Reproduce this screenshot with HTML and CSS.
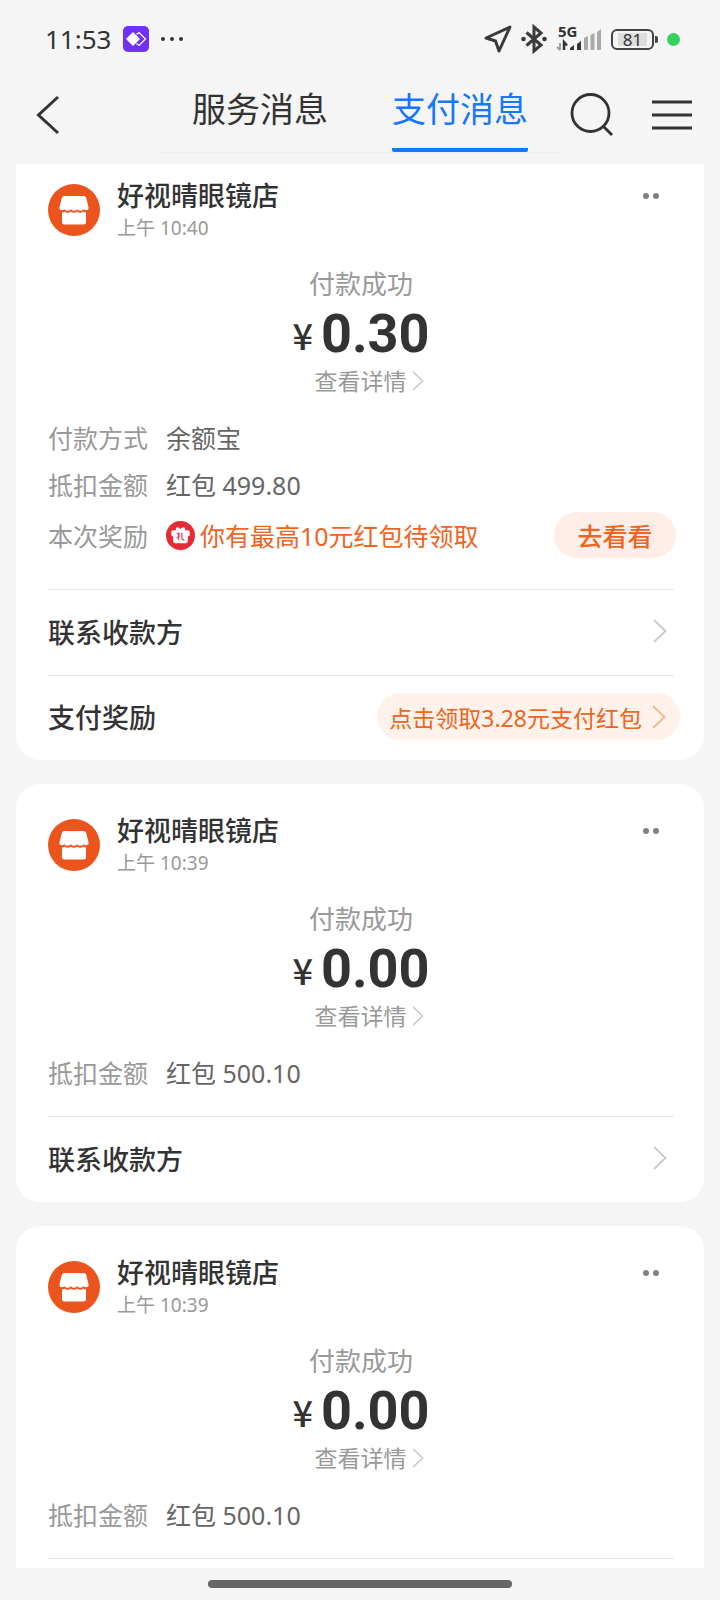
FILE: index.html
```html
<!DOCTYPE html>
<html lang="zh-CN">
<head>
    <meta charset="UTF-8">
    <meta name="viewport" content="width=device-width, initial-scale=1.0">
    <title>支付消息</title>
    <link rel="stylesheet" href="styles.css">
</head>
<body>
    <!-- 公用图标 -->
    <svg class="symbols" aria-hidden="true">
        <symbol id="icon-shop" viewBox="0 0 52 52">
            <circle cx="26" cy="26" r="26" fill="#eb541c"/>
            <path d="M16.500 12h19q2.200 0 2.800 2.200l2.200 9q.5 3-2.300 3.100-1.600 0-2.700-1.100-1.300 1.500-3.100 1.500t-3.200-1.500q-1.300 1.500-3.200 1.500t-3.200-1.500q-1.300 1.500-3.200 1.500t-3.100-1.500q-1.100 1.100-2.700 1.100-2.800-.1-2.300-3.100l2.200-9q.6-2.200 2.800-2.200z" fill="#fff"/>
            <path d="M14 28.500q1.700-.1 2.700-1 1.300 1.300 3.100 1.300t3-1.300q1.300 1.300 3.200 1.300t3.200-1.300q1.200 1.300 3 1.300t3.100-1.300q1 .9 2.700 1V38q0 2.500-2.500 2.500h-19Q14 40.500 14 38z" fill="#fff"/>
        </symbol>
        <symbol id="icon-arrow" viewBox="0 0 14 24">
            <path d="M1 1l11.500 11L1 23" fill="none" stroke="currentColor" stroke-width="2"/>
        </symbol>
    </svg>

    <div class="status-bar">
        <span class="clock">11:53</span>
        <svg class="app-badge" width="26" height="26" viewBox="0 0 26 26">
            <rect width="26" height="26" rx="5" fill="#7131f5"/>
            <path d="M13.500 8.500L16 6.500l6.500 6.500-6.500 6.500-2.500-2" fill="none" stroke="#fff" stroke-width="1.200"/>
            <path d="M10 6l7 7-7 7-7-7z" fill="#fff"/>
        </svg>
        <svg width="24" height="6" viewBox="0 0 24 6" fill="#333">
            <circle cx="3" cy="3" r="2"/><circle cx="12" cy="3" r="2"/><circle cx="21" cy="3" r="2"/>
        </svg>
        <div class="status-icons">
            <svg width="28" height="28" viewBox="0 0 28 28">
                <path d="M26 2L15 26l-3.500-10L2 13z" fill="none" stroke="#3a3a3a" stroke-width="3" stroke-linejoin="round"/>
            </svg>
            <svg width="26" height="30" viewBox="0 0 26 30">
                <path d="M5.500 8.500L20 21l-7 6V3l7 6L5.500 21.500" fill="none" stroke="#3a3a3a" stroke-width="3"/>
                <circle cx="2.500" cy="15" r="2.300" fill="#3a3a3a"/><circle cx="23.500" cy="15" r="2.300" fill="#3a3a3a"/>
            </svg>
            <div class="signal">
                <span class="network">5G</span>
                <svg width="46" height="26" viewBox="0 0 46 26">
                    <path d="M4 17v7M4 24l-3-3" fill="none" stroke="#999" stroke-width="1.800"/>
                    <path d="M8 24v-8l3 3.500" fill="none" stroke="#333" stroke-width="2.400"/>
                    <path d="M14 24v-2l4-3v5zM21 24v-6l4-3v9z" fill="#333"/>
                    <path d="M28 24V12l4-2v14zM34.500 24V9l4-2v17zM41 24V6l4-3v21z" fill="#aaa"/>
                </svg>
            </div>
            <div class="battery"><span class="battery-level">81</span></div>
            <span class="live-dot"></span>
        </div>
    </div>

    <header class="nav-bar">
        <button class="icon-btn back" aria-label="返回">
            <svg width="24" height="40" viewBox="0 0 24 40">
                <path d="M22 2L2.500 20 22 38" fill="none" stroke="#333" stroke-width="3"/>
            </svg>
        </button>
        <nav class="tabs">
            <a class="tab" href="#service">服务消息</a>
            <a class="tab active" href="#payment">支付消息</a>
        </nav>
        <button class="icon-btn" aria-label="搜索">
            <svg width="44" height="44" viewBox="0 0 44 44" fill="none" stroke="#333" stroke-width="2.800">
                <circle cx="20.500" cy="20" r="18.500"/>
                <path d="M33 33l9 9"/>
            </svg>
        </button>
        <button class="icon-btn menu" aria-label="菜单">
            <svg width="40" height="30" viewBox="0 0 40 30" fill="none" stroke="#333" stroke-width="3">
                <path d="M0 2h40M0 15h40M0 28h40"/>
            </svg>
        </button>
    </header>

    <main class="messages">
        <article class="card scrolled">
            <div class="card-head">
                <svg class="avatar"><use href="#icon-shop"/></svg>
                <div class="shop">
                    <h2 class="shop-name">好视晴眼镜店</h2>
                    <p class="time">上午 10:40</p>
                </div>
                <button class="more" aria-label="更多"><i></i><i></i></button>
            </div>
            <div class="summary">
                <p class="state">付款成功</p>
                <p class="amount"><span class="yen">¥</span><span class="num">0.30</span></p>
                <a class="detail-link" href="#detail">查看详情<svg class="arrow small"><use href="#icon-arrow"/></svg></a>
            </div>
            <dl class="rows">
                <div class="row"><dt>付款方式</dt><dd>余额宝</dd></div>
                <div class="row"><dt>抵扣金额</dt><dd>红包 499.80</dd></div>
                <div class="row reward">
                    <dt>本次奖励</dt>
                    <dd>
                        <svg class="gift" width="29" height="29" viewBox="0 0 30 30">
                            <circle cx="15" cy="15" r="15" fill="#e52b35"/>
                            <path d="M7.500 9.500h3Q9.500 6.500 12 6.500q2 0 3 2 1-2 3-2 2.500 0 1.500 3h3q2 0 2 2v3q0 1.500-2 1.500V21q0 2-2 2h-11q-2 0-2-2v-5q-2 0-2-1.500v-3q0-2 2-2z" fill="#fff"/>
                            <path d="M11 13h3.500M13 12v8M14.500 15L11 17.500M16.500 12v6q0 1.500 2.500 1.500" fill="none" stroke="#e2505a" stroke-width="1.300"/>
                        </svg>
                        <span>你有最高10元红包待领取</span>
                        <button class="go-btn">去看看</button>
                    </dd>
                </div>
            </dl>
            <a class="entry" href="#contact">联系收款方<svg class="arrow"><use href="#icon-arrow"/></svg></a>
            <a class="entry" href="#reward">支付奖励
                <span class="pill">点击领取3.28元支付红包<svg class="arrow"><use href="#icon-arrow"/></svg></span>
            </a>
        </article>

        <article class="card">
            <div class="card-head">
                <svg class="avatar"><use href="#icon-shop"/></svg>
                <div class="shop">
                    <h2 class="shop-name">好视晴眼镜店</h2>
                    <p class="time">上午 10:39</p>
                </div>
                <button class="more" aria-label="更多"><i></i><i></i></button>
            </div>
            <div class="summary">
                <p class="state">付款成功</p>
                <p class="amount"><span class="yen">¥</span><span class="num">0.00</span></p>
                <a class="detail-link" href="#detail">查看详情<svg class="arrow small"><use href="#icon-arrow"/></svg></a>
            </div>
            <dl class="rows">
                <div class="row"><dt>抵扣金额</dt><dd>红包 500.10</dd></div>
            </dl>
            <a class="entry" href="#contact">联系收款方<svg class="arrow"><use href="#icon-arrow"/></svg></a>
        </article>

        <article class="card last">
            <div class="card-head">
                <svg class="avatar"><use href="#icon-shop"/></svg>
                <div class="shop">
                    <h2 class="shop-name">好视晴眼镜店</h2>
                    <p class="time">上午 10:39</p>
                </div>
                <button class="more" aria-label="更多"><i></i><i></i></button>
            </div>
            <div class="summary">
                <p class="state">付款成功</p>
                <p class="amount"><span class="yen">¥</span><span class="num">0.00</span></p>
                <a class="detail-link" href="#detail">查看详情<svg class="arrow small"><use href="#icon-arrow"/></svg></a>
            </div>
            <dl class="rows">
                <div class="row"><dt>抵扣金额</dt><dd>红包 500.10</dd></div>
            </dl>
        </article>
    </main>

    <div class="home-bar"></div>
</body>
</html>
```
FILE: styles.css
```css
* {
    box-sizing: border-box;
    margin: 0;
    padding: 0;
}

body {
    display: flex;
    flex-direction: column;
    height: 100vh;
    overflow: hidden;
    background-color: #f5f5f5;
    color: #333;
    font-family: "Noto Sans", "Noto Sans CJK SC", sans-serif;
}

a {
    color: inherit;
    text-decoration: none;
}

button {
    border: none;
    background: none;
    color: inherit;
    font-family: inherit;
    cursor: pointer;
}

svg {
    display: block;
    flex: none;
}

.symbols {
    position: absolute;
    width: 0;
    height: 0;
}

/* 状态栏 */
.status-bar {
    display: flex;
    align-items: center;
    height: 78px;
    padding: 0 40px 0 45px;
}

.clock {
    font-size: 26px;
    line-height: 36px;
}

.app-badge {
    margin: 0 11px 0 12px;
}

.status-icons {
    display: flex;
    align-items: center;
    gap: 9px;
    margin-left: auto;
}

.signal {
    position: relative;
}

.network {
    position: absolute;
    top: -3px;
    left: 2px;
    font-size: 15px;
    font-weight: 700;
    line-height: 16px;
}

.battery {
    position: relative;
    width: 43px;
    height: 21px;
    margin-right: 4px;
    padding: 2px 5px;
    border: 2px solid #444;
    border-radius: 6px;
}

.battery::after {
    content: "";
    position: absolute;
    top: 5px;
    right: -6px;
    width: 3px;
    height: 7px;
    border-radius: 0 2px 2px 0;
    background-color: #444;
}

.battery-level {
    display: block;
    background-color: #ddd;
    font-size: 17px;
    line-height: 13px;
    text-align: center;
}

.live-dot {
    width: 13px;
    height: 13px;
    border-radius: 50%;
    background-color: #35cf62;
}

/* 导航栏 */
.nav-bar {
    display: flex;
    align-items: flex-start;
    height: 86px;
    padding: 0 28px 0 36px;
}

.icon-btn {
    display: flex;
    align-items: center;
    height: 74px;
}

.back {
    margin-right: auto;
}

.tabs {
    display: flex;
    justify-content: space-between;
    width: 400px;
    height: 75px;
    margin-right: 10px;
    padding: 0 32px;
    border-bottom: 1px solid #eee;
}

.tab {
    height: 74px;
    font-size: 34px;
    line-height: 62px;
}

.tab.active {
    border-bottom: 4px solid #1677ff;
    border-radius: 2px;
    color: #1677ff;
}

.menu {
    margin-left: 38px;
}

/* 消息卡片 */
.messages {
    display: flex;
    flex: 1;
    flex-direction: column;
    gap: 24px;
    min-height: 0;
    padding: 0 16px;
    overflow: hidden;
}

.card {
    flex: none;
    padding: 27px 30px 0 32px;
    border-radius: 24px;
    background-color: #fff;
}

.card.scrolled {
    padding-top: 12px;
    border-radius: 0 0 24px 24px;
}

.card.last {
    flex: 1 0 auto;
    border-radius: 24px 24px 0 0;
}

.card-head {
    display: flex;
    align-items: center;
    gap: 17px;
}

.avatar {
    width: 52px;
    height: 52px;
}

.shop {
    flex: 1;
    padding-top: 4px;
}

.shop-name {
    font-size: 27px;
    font-weight: 500;
    line-height: 32px;
}

.time {
    color: #999;
    font-size: 19px;
    line-height: 32px;
}

.more {
    display: flex;
    align-self: flex-start;
    gap: 4px;
    padding: 17px 15px;
}

.more i {
    width: 6px;
    height: 6px;
    border-radius: 50%;
    background-color: #808080;
}

.summary {
    display: flex;
    flex-direction: column;
    align-items: center;
    margin-top: 22px;
}

.state {
    color: #999;
    font-size: 26px;
    line-height: 36px;
}

.amount {
    display: flex;
    align-items: center;
    gap: 8px;
    line-height: 64px;
}

.yen {
    font-family: "Noto Sans CJK SC", sans-serif;
    font-size: 36px;
    font-weight: 500;
}

.num {
    font-family: Roboto, sans-serif;
    font-size: 54px;
    font-weight: 700;
}

.detail-link {
    display: flex;
    align-items: center;
    gap: 5px;
    color: #999;
    font-size: 23px;
    line-height: 30px;
}

.arrow {
    width: 14px;
    height: 24px;
    margin-right: 7px;
    color: #ccc;
}

/* 箭头不参与文字居中 */
.arrow.small {
    width: 12px;
    height: 20px;
    margin-right: -16px;
}

.rows {
    margin-top: 17px;
    padding-bottom: 21px;
    border-bottom: 1px solid #e8e8e8;
}

.row {
    display: flex;
    align-items: center;
    gap: 18px;
    height: 47px;
    font-size: 25px;
}

.row dt {
    color: #999;
}

.row dd {
    display: flex;
    flex: 1;
    align-items: center;
    color: #666;
}

.row.reward {
    height: 56px;
    margin-right: -2px;
    margin-bottom: 5px;
}

.row.reward dd {
    color: #f0641e;
}

.gift {
    margin-right: 5px;
}

.go-btn {
    width: 122px;
    height: 46px;
    margin-left: auto;
    border-radius: 23px;
    background-color: #ffeee7;
    font-size: 25px;
    font-weight: 500;
}

.entry {
    display: flex;
    align-items: center;
    justify-content: space-between;
    height: 85px;
    padding-bottom: 3px;
    font-size: 27px;
    font-weight: 500;
}

.entry + .entry {
    border-top: 1px solid #e8e8e8;
}

.pill {
    display: flex;
    align-items: center;
    gap: 10px;
    height: 47px;
    margin-right: -6px;
    padding: 0 7px 0 12px;
    border-radius: 24px;
    background-color: #fff2ea;
    color: #f0641e;
    font-size: 23px;
    font-weight: 400;
}

.pill .arrow {
    color: #f5b898;
}

.home-bar {
    flex: none;
    width: 304px;
    height: 8px;
    margin: 12px auto;
    border-radius: 4px;
    background-color: #666;
}
```
